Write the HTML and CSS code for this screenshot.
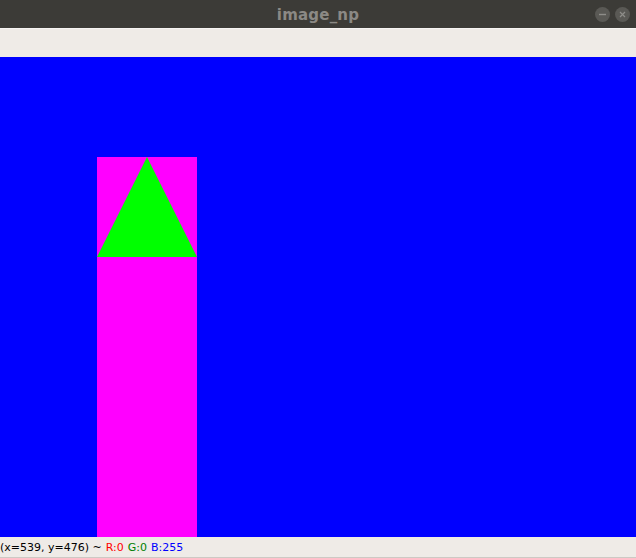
FILE: index.html
```html
<!DOCTYPE html>
<html>
<head>
<meta charset="utf-8">
<link rel="stylesheet" href="styles.css">
</head>
<body>
<div class="window">
  <div class="titlebar">
    <div class="spacer"></div>
    <div class="title">image_np</div>
    <div class="buttons">
      <span class="btn">
        <svg width="15" height="15" viewBox="0 0 15 15"><circle cx="7.5" cy="7.5" r="7.5" fill="#5a5955"/><line x1="4" y1="7.5" x2="11" y2="7.5" stroke="#8e8d89" stroke-width="1.4"/></svg>
      </span>
      <span class="btn">
        <svg width="15" height="15" viewBox="0 0 15 15"><circle cx="7.5" cy="7.5" r="7.5" fill="#5a5955"/><path d="M5 5 L10 10 M10 5 L5 10" stroke="#8e8d89" stroke-width="1.2"/></svg>
      </span>
    </div>
  </div>
  <div class="toolbar"></div>
  <div class="canvas">
    <svg width="636" height="480" viewBox="0 0 636 480">
      <rect x="0" y="0" width="636" height="480" fill="#0000ff"/>
      <rect x="97" y="100" width="100" height="380" fill="#ff00ff"/>
      <polygon points="147,100 197,200 97,200" fill="#00ff00"/>
    </svg>
  </div>
  <div class="status">
    <span class="coords">(x=539, y=476) ~</span>
    <span class="r">R:0</span>
    <span class="g">G:0</span>
    <span class="b">B:255</span>
  </div>
</div>
</body>
</html>
```
FILE: styles.css
```css
html, body {
  margin: 0;
  padding: 0;
}
body {
  width: 636px;
  height: 558px;
  overflow: hidden;
  background: #efebe7;
}
.window {
  display: flex;
  flex-direction: column;
  width: 636px;
  height: 558px;
}
.titlebar {
  height: 28px;
  background: #3c3b37;
  display: grid;
  grid-template-columns: 1fr auto 1fr;
  align-items: center;
}
.title {
  font-family: "DejaVu Sans", sans-serif;
  font-weight: bold;
  font-size: 15px;
  color: #8b8985;
  letter-spacing: 0.2px;
  padding-top: 1px;
}
.buttons {
  justify-self: end;
  display: flex;
  gap: 5px;
  padding-right: 6px;
  padding-top: 1px;
}
.btn {
  display: block;
  width: 15px;
  height: 15px;
}
.btn svg {
  display: block;
}
.toolbar {
  height: 29px;
  background: #efebe7;
  box-shadow: inset 0 1px 0 #f6f4f2;
}
.canvas {
  height: 480px;
  overflow: hidden;
}
.canvas svg {
  display: block;
}
.status {
  box-sizing: border-box;
  height: 21px;
  background: #efebe7;
  border-bottom: 1px solid #cdc9c4;
  font-family: "DejaVu Sans", sans-serif;
  font-size: 11px;
  line-height: 16px;
  padding-top: 3px;
  display: flex;
  gap: 4px;
  white-space: nowrap;
  overflow: hidden;
}
.coords { color: #000; }
.r { color: #ff0000; }
.g { color: #008000; }
.b { color: #0000ff; }
```
